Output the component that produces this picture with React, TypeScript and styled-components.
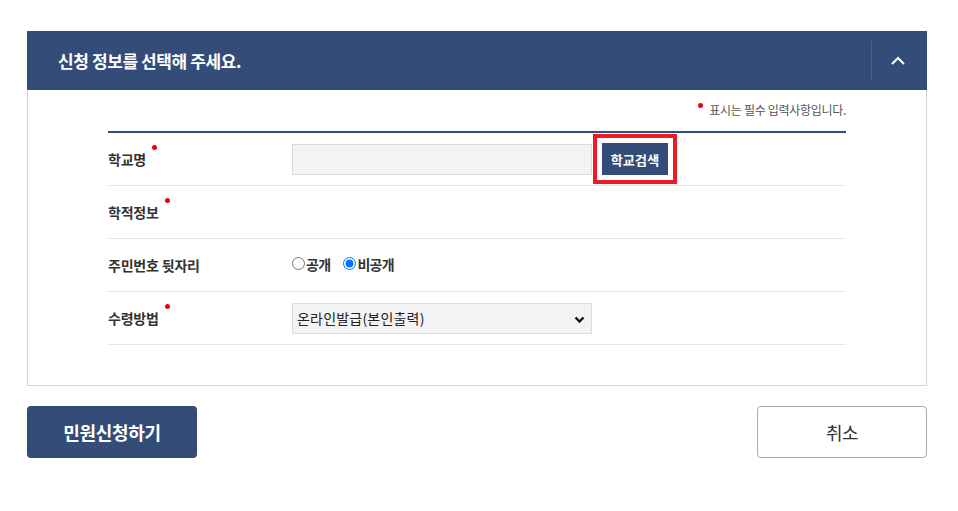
import React from 'react'
import styled, { createGlobalStyle } from 'styled-components'

const NAVY = '#344c78'

const GlobalStyle = createGlobalStyle`
  html, body {
    margin: 0;
    padding: 0;
    background: #fff;
  }
  body {
    font-family: "Noto Sans CJK KR", "Noto Sans", sans-serif;
    color: #222;
  }
`

const Page = styled.div`
  width: 900px;
  padding: 31px 0 0 27px;
`

const Panel = styled.section`
  display: flex;
  flex-direction: column;
`

const PanelHeader = styled.div`
  height: 59px;
  background: ${NAVY};
  display: flex;
  align-items: center;
`

const PanelTitle = styled.h2`
  flex: 1;
  margin: 0;
  padding-left: 31px;
  font-size: 17px;
  font-weight: 700;
  letter-spacing: -0.4px;
  color: #fff;
`

const ToggleArea = styled.div`
  width: 51px;
  height: 40px;
  padding-right: 4px;
  border-left: 1px solid #4b6292;
  display: flex;
  align-items: center;
  justify-content: center;
`

const PanelBody = styled.div`
  border: 1px solid #d4d4d4;
  border-top: none;
  padding: 11px 80px 40px;
`

const RequiredNote = styled.p`
  margin: 0 0 12px;
  text-align: right;
  font-size: 12px;
  line-height: 18px;
  letter-spacing: -0.3px;
  color: #555;
`

const Dot = styled.span`
  display: inline-block;
  width: 5px;
  height: 5px;
  border-radius: 50%;
  background: #e60012;
  vertical-align: top;
  margin: 2px 6px 0 0;
`

const FormTable = styled.div`
  border-top: 2px solid ${NAVY};
`

const Row = styled.div`
  display: flex;
  align-items: center;
  height: 52px;
  border-bottom: 1px solid #e6e6e6;
`

const Label = styled.div<{ $required?: boolean }>`
  width: 184px;
  flex-shrink: 0;
  font-size: 14px;
  font-weight: 700;
  letter-spacing: -0.2px;
  color: #333;

  span {
    position: relative;
  }

  span::after {
    content: '';
    display: ${(p) => (p.$required ? 'block' : 'none')};
    position: absolute;
    right: -11px;
    top: -4px;
    width: 5px;
    height: 5px;
    border-radius: 50%;
    background: #e60012;
  }
`

const Field = styled.div`
  display: flex;
  align-items: center;
  flex: 1;
`

const TextInput = styled.input`
  box-sizing: border-box;
  width: 300px;
  height: 31px;
  border: 1px solid #dcdcdc;
  background: #f3f3f3;
  margin: 0;
  padding: 0 8px;
  font-family: inherit;
`

const SearchButton = styled.button`
  margin-left: 10px;
  width: 66px;
  height: 32px;
  border: none;
  background: ${NAVY};
  color: #fff;
  font-family: inherit;
  font-size: 13px;
  font-weight: 700;
  letter-spacing: 0.2px;
  padding: 0;
  outline: 4px solid #ed1c24;
  outline-offset: 5px;
`

const RadioLabel = styled.label`
  display: inline-flex;
  align-items: center;
  margin-right: 13px;
  margin-top: -3px;
  font-size: 14px;
  font-weight: 700;
  letter-spacing: -0.7px;
  color: #333;

  input {
    margin: 0 1px 0 0;
    width: 13px;
    height: 13px;
  }
`

const SelectWrap = styled.div`
  position: relative;
  width: 300px;
  height: 31px;

  svg {
    position: absolute;
    right: 7px;
    top: 13px;
    pointer-events: none;
  }
`

const Select = styled.select`
  appearance: none;
  box-sizing: border-box;
  width: 100%;
  height: 100%;
  border: 1px solid #dcdcdc;
  background: #f3f3f3;
  padding: 0 4px;
  font-family: inherit;
  font-size: 14px;
  letter-spacing: 0.2px;
  color: #222;
`

const Actions = styled.div`
  display: flex;
  justify-content: space-between;
  margin-top: 20px;
`

const ActionButton = styled.button<{ $primary?: boolean }>`
  box-sizing: border-box;
  width: 170px;
  height: 52px;
  border-radius: 4px;
  font-family: inherit;
  font-size: 18px;
  letter-spacing: ${(p) => (p.$primary ? '-0.3px' : '-0.5px')};
  font-weight: ${(p) => (p.$primary ? 700 : 400)};
  border: ${(p) => (p.$primary ? 'none' : '1px solid #aaa')};
  background: ${(p) => (p.$primary ? NAVY : '#fff')};
  color: ${(p) => (p.$primary ? '#fff' : '#333')};
`

const App = () => {
  return (
    <Page>
      <GlobalStyle />
      <Panel>
        <PanelHeader>
          <PanelTitle>신청 정보를 선택해 주세요.</PanelTitle>
          <ToggleArea>
            <svg width="14" height="9" viewBox="0 0 14 9">
              <polyline points="1,8 7,2 13,8" fill="none" stroke="#fff" strokeWidth="2" />
            </svg>
          </ToggleArea>
        </PanelHeader>
        <PanelBody>
          <RequiredNote>
            <Dot />표시는 필수 입력사항입니다.
          </RequiredNote>
          <FormTable>
            <Row>
              <Label $required><span>학교명</span></Label>
              <Field>
                <TextInput type="text" />
                <SearchButton>학교검색</SearchButton>
              </Field>
            </Row>
            <Row>
              <Label $required><span>학적정보</span></Label>
              <Field />
            </Row>
            <Row>
              <Label><span>주민번호 뒷자리</span></Label>
              <Field>
                <RadioLabel>
                  <input type="radio" name="ssn" />공개
                </RadioLabel>
                <RadioLabel>
                  <input type="radio" name="ssn" defaultChecked />비공개
                </RadioLabel>
              </Field>
            </Row>
            <Row>
              <Label $required><span>수령방법</span></Label>
              <Field>
                <SelectWrap>
                  <Select defaultValue="online">
                    <option value="online">온라인발급(본인출력)</option>
                  </Select>
                  <svg width="11" height="7" viewBox="0 0 11 7">
                    <polyline points="1.5,1.5 5.5,5.5 9.5,1.5" fill="none" stroke="#111" strokeWidth="2.4" />
                  </svg>
                </SelectWrap>
              </Field>
            </Row>
          </FormTable>
        </PanelBody>
      </Panel>
      <Actions>
        <ActionButton $primary>민원신청하기</ActionButton>
        <ActionButton>취소</ActionButton>
      </Actions>
    </Page>
  )
}

export default App
